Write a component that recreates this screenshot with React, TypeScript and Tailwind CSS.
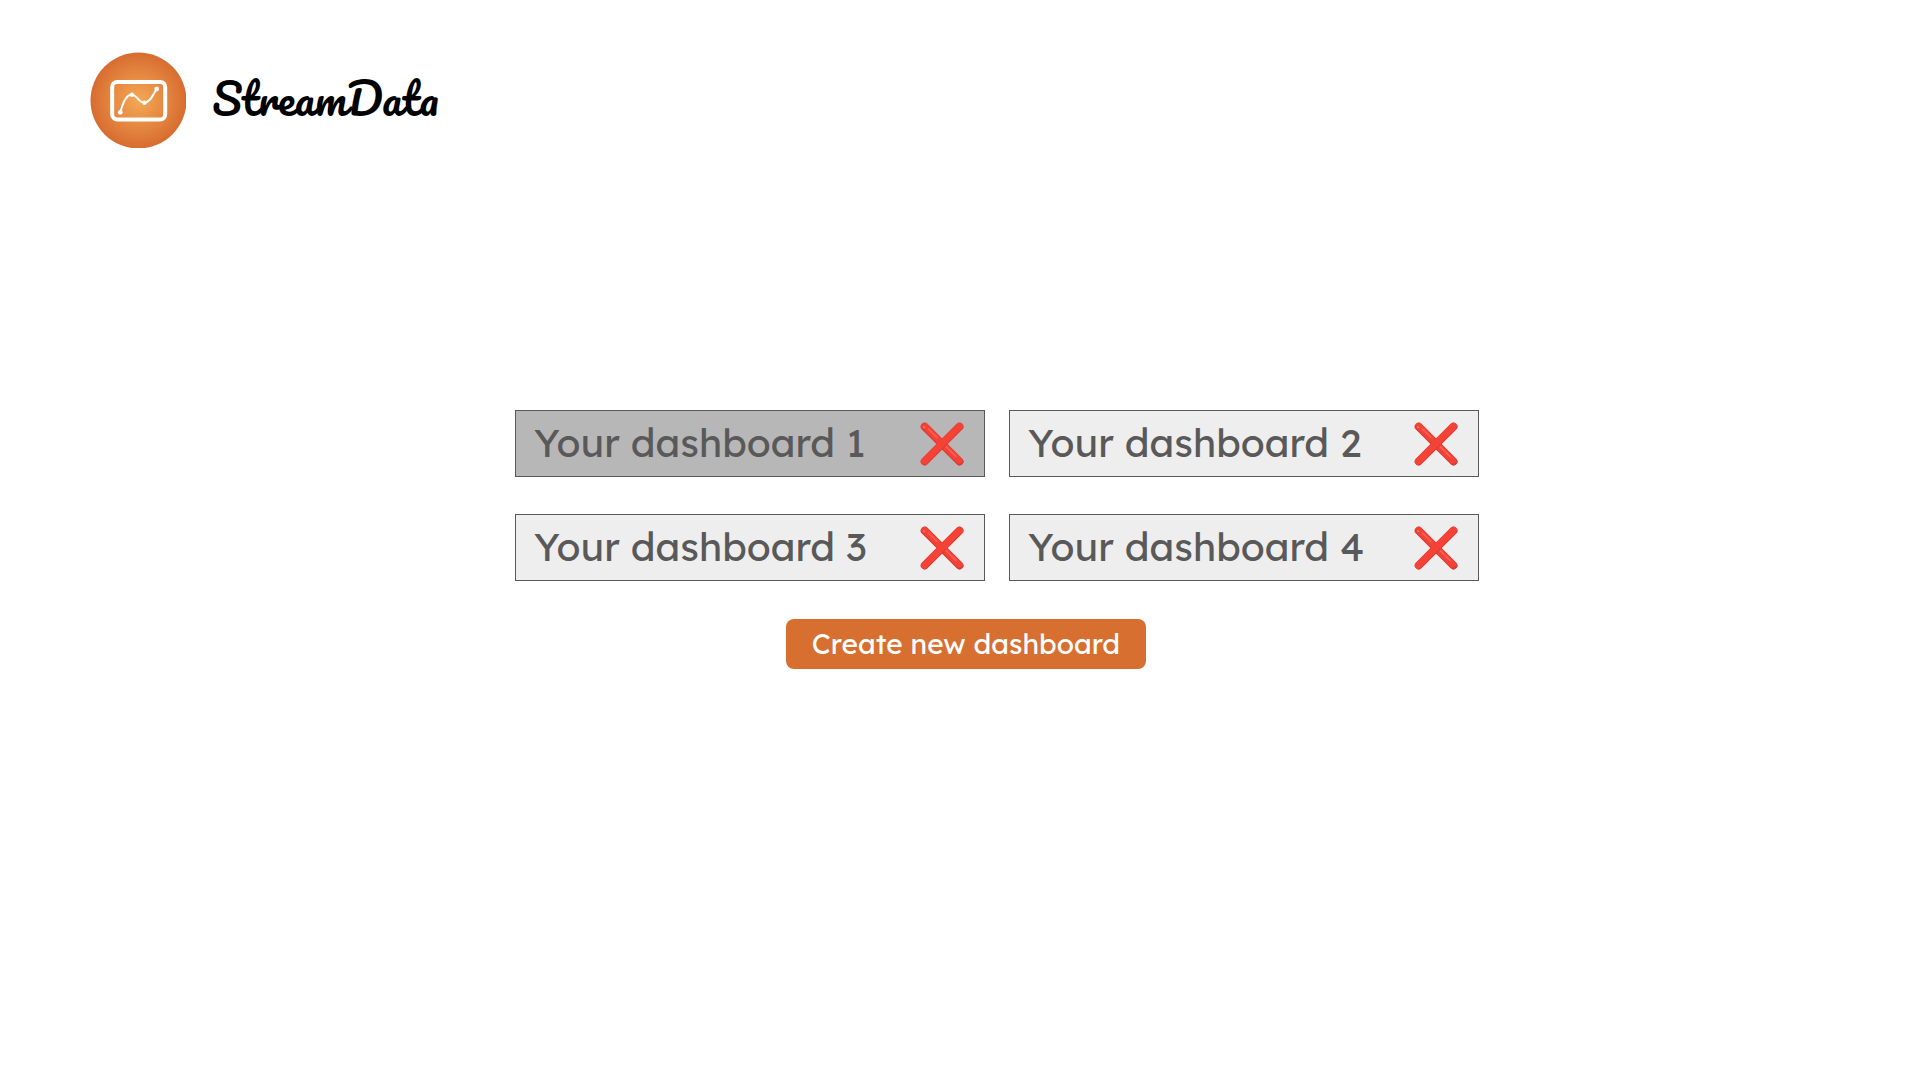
const dashboards = [
  { id: 1, name: 'Your dashboard 1', active: true },
  { id: 2, name: 'Your dashboard 2', active: false },
  { id: 3, name: 'Your dashboard 3', active: false },
  { id: 4, name: 'Your dashboard 4', active: false },
];

function Logo() {
  return (
    <svg viewBox="0 0 96 96" className="size-24 shrink-0" aria-hidden="true">
      <defs>
        <radialGradient id="disc">
          <stop offset="0" stopColor="#f3a955" />
          <stop offset="0.5" stopColor="#e78b43" />
          <stop offset="1" stopColor="#d76c30" />
        </radialGradient>
      </defs>
      <circle cx="48.500" cy="48.500" r="48" fill="url(#disc)" />
      <rect x="22.200" y="30" width="53" height="37.500" rx="5" fill="none" stroke="#fff" strokeWidth="4" />
      <path d="M30.300 60.300C33 50 37 42 42 42.700C47 43 49 51 54.500 50.700C61 50 63 42 66.700 37" fill="none" stroke="#fff" strokeWidth="2" />
      <g fill="#fff">
        <circle cx="30.300" cy="60.300" r="2.400" />
        <circle cx="42" cy="42.700" r="2.200" />
        <circle cx="54.500" cy="50.700" r="2.200" />
        <circle cx="66.700" cy="37" r="2.400" />
      </g>
    </svg>
  );
}

function CrossMark() {
  return (
    <svg viewBox="0 0 44 44" className="size-11" fill="none" strokeLinecap="round" aria-hidden="true">
      <path d="M4.700 4.700L39.500 39.500" stroke="#d83a35" strokeWidth="8" />
      <path d="M4.900 4.300L39 38.400" stroke="#f44336" strokeWidth="6.500" />
      <path d="M8.500 7L17 15.500M26 24.500L36 34.500" stroke="#fc6258" strokeWidth="1.500" />
      <path d="M39.500 4.700L4.700 39.500" stroke="#dd3c36" strokeWidth="8" />
      <path d="M39.100 4.400L4.500 39" stroke="#f44336" strokeWidth="7" />
      <path d="M4 5L4.200 5.200" stroke="#ff8a80" strokeWidth="1.600" />
    </svg>
  );
}

export default function App() {
  return (
    <div className="flex min-h-screen flex-col bg-white font-['Lexend','Inter',sans-serif]">
      <header className="flex h-[200px] items-center gap-[26px] pl-[90px]">
        <Logo />
        <h1 className="pb-1 font-['Pacifico','Lato',cursive] text-[43px] leading-[60px] font-normal text-black">StreamData</h1>
      </header>
      <main className="flex flex-1 flex-col items-center justify-center gap-[38px] pb-[201px] pl-3">
        <ul className="ml-[62px] grid w-full max-w-[964px] grid-cols-2 gap-x-6 gap-y-[37px]">
          {dashboards.map((d) => (
            <li
              key={d.id}
              className={
                d.active
                  ? 'flex items-center justify-between border border-[#595959] bg-[#b7b7b7] pr-5 pl-[18px]'
                  : 'flex items-center justify-between border border-[#595959] bg-[#eeeeee] pr-5 pl-[18px]'
              }
            >
              <button type="button" className="pt-2 pb-[10px] text-left text-[39px] leading-[47px] text-[#595959]">
                {d.name}
              </button>
              <button type="button" aria-label={`Delete ${d.name}`}>
                <CrossMark />
              </button>
            </li>
          ))}
        </ul>
        <button type="button" className="rounded-lg bg-[#d76f30] px-[26px] py-2 text-[28px] leading-[34px] text-white">
          Create new dashboard
        </button>
      </main>
    </div>
  );
}
